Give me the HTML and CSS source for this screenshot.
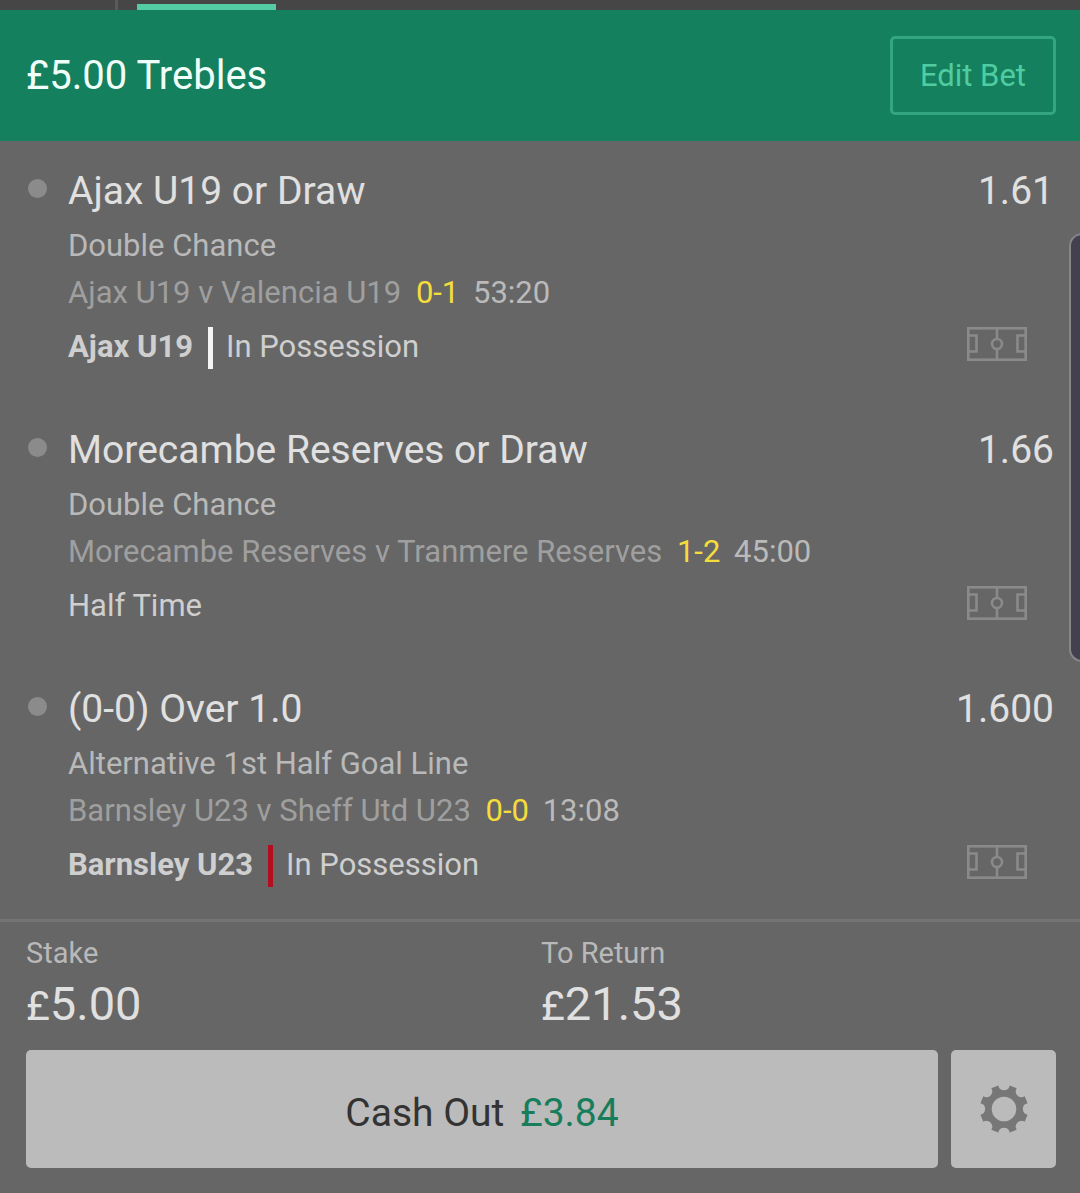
FILE: index.html
```
<!DOCTYPE html>
<html lang="en">

<head>
    <meta charset="UTF-8">
    <meta name="viewport" content="width=device-width, initial-scale=1.0">
    <title>My Bets</title>
    <link rel="stylesheet" href="styles.css">
</head>

<body>
    <!-- shared icons -->
    <svg class="icon-defs" aria-hidden="true">
        <symbol id="pitch" viewBox="0 0 60 34">
            <g fill="none" stroke="currentColor" stroke-width="2.6">
                <rect x="1.3" y="1.3" width="57.4" height="31.4" />
                <path d="M2 8.5h7.5v16H2M58 8.5h-7.5v16H58M30 1v10M30 22v11" />
                <circle cx="30" cy="17" r="5" />
            </g>
        </symbol>
    </svg>

    <div class="tabs">
        <span class="tab-divider"></span>
        <span class="tab-active"></span>
    </div>

    <header class="bet-header">
        <h1>£5.00 Trebles</h1>
        <button type="button" class="edit-btn">Edit Bet</button>
    </header>

    <main class="selections">
        <section class="selection">
            <span class="dot"></span>
            <div class="details">
                <div class="title-row">
                    <h2>Ajax U19 or Draw</h2>
                    <span class="odds">1.61</span>
                </div>
                <p class="market">Double Chance</p>
                <p class="fixture">Ajax U19 v Valencia U19 <span class="score">0-1</span> <span class="clock">53:20</span></p>
                <div class="status-row">
                    <strong>Ajax U19</strong>
                    <span class="team-bar white"></span>
                    <span>In Possession</span>
                    <svg class="pitch-icon"><use href="#pitch" /></svg>
                </div>
            </div>
        </section>

        <section class="selection">
            <span class="dot"></span>
            <div class="details">
                <div class="title-row">
                    <h2>Morecambe Reserves or Draw</h2>
                    <span class="odds">1.66</span>
                </div>
                <p class="market">Double Chance</p>
                <p class="fixture">Morecambe Reserves v Tranmere Reserves <span class="score">1-2</span> <span class="clock">45:00</span></p>
                <div class="status-row">
                    <span>Half Time</span>
                    <svg class="pitch-icon"><use href="#pitch" /></svg>
                </div>
            </div>
        </section>

        <section class="selection">
            <span class="dot"></span>
            <div class="details">
                <div class="title-row">
                    <h2>(0-0) Over 1.0</h2>
                    <span class="odds">1.600</span>
                </div>
                <p class="market">Alternative 1st Half Goal Line</p>
                <p class="fixture">Barnsley U23 v Sheff Utd U23 <span class="score">0-0</span> <span class="clock">13:08</span></p>
                <div class="status-row">
                    <strong>Barnsley U23</strong>
                    <span class="team-bar red"></span>
                    <span>In Possession</span>
                    <svg class="pitch-icon"><use href="#pitch" /></svg>
                </div>
            </div>
        </section>
    </main>

    <footer class="summary">
        <div class="totals">
            <div class="total">
                <span class="label">Stake</span>
                <span class="amount"><span class="currency">£</span>5.00</span>
            </div>
            <div class="total">
                <span class="label">To Return</span>
                <span class="amount"><span class="currency">£</span>21.53</span>
            </div>
        </div>
        <div class="actions">
            <button type="button" class="cashout-btn">Cash Out <span class="cashout-value">£3.84</span></button>
            <button type="button" class="settings-btn" aria-label="Cash out settings">
                <svg class="gear-icon" viewBox="-25 -25 50 50">
                    <path fill="currentColor" fill-rule="evenodd" d="M5.7 -23.6L12.7 -20.7A5.8 5.8 0 0 0 20.7 -12.7L23.6 -5.7A5.8 5.8 0 0 0 23.6 5.7L20.7 12.7A5.8 5.8 0 0 0 12.7 20.7L5.7 23.6A5.8 5.8 0 0 0 -5.7 23.6L-12.7 20.7A5.8 5.8 0 0 0 -20.7 12.7L-23.6 5.7A5.8 5.8 0 0 0 -23.6 -5.7L-20.7 -12.7A5.8 5.8 0 0 0 -12.7 -20.7L-5.7 -23.6A5.8 5.8 0 0 0 5.7 -23.6ZM12.3 0A12.3 12.3 0 1 0 -12.3 0A12.3 12.3 0 1 0 12.3 0Z" />
                </svg>
            </button>
        </div>
    </footer>

    <div class="edge-handle"></div>
</body>

</html>
```
FILE: styles.css
```
* {
    box-sizing: border-box;
}

body {
    position: relative;
    margin: 0;
    overflow-x: hidden;
    font-family: Roboto, "Liberation Sans", sans-serif;
    font-size: 31px;
    color: #cfcfcf;
    background-color: #666;
}

h1,
h2,
p {
    margin: 0;
    font-weight: 400;
}

button {
    font-family: inherit;
    cursor: pointer;
}

.icon-defs {
    display: none;
}

/* Tabs */

.tabs {
    display: flex;
    align-items: flex-end;
    gap: 19px;
    height: 10px;
    padding-left: 115px;
    background-color: #464646;
}

.tab-divider {
    width: 3px;
    height: 10px;
    background-color: #5a5a5a;
}

.tab-active {
    width: 139px;
    height: 6px;
    background-color: #55cda4;
}

/* Header */

.bet-header {
    display: flex;
    align-items: center;
    justify-content: space-between;
    padding: 26px 24px 26px 26px;
    background-color: #15805d;
}

.bet-header h1 {
    font-size: 40px;
    color: #f0fffa;
}

.edit-btn {
    height: 79px;
    padding: 0 27px;
    font-size: 31px;
    color: #50cca2;
    background: none;
    border: 3px solid #33a580;
    border-radius: 5px;
}

/* Selections */

.selections {
    padding-bottom: 1px;
}

.selection {
    display: flex;
    gap: 21px;
    padding: 24px 26px 31px 28px;
}

.dot {
    flex: none;
    width: 19px;
    height: 19px;
    margin-top: 14px;
    border-radius: 50%;
    background-color: #8b8b8b;
}

.details {
    flex: 1;
}

.title-row {
    display: flex;
    justify-content: space-between;
    margin-bottom: 4px;
    font-size: 39px;
    line-height: 52px;
    color: #e0e0e0;
}

.title-row h2 {
    font-size: 39px;
}

.market {
    line-height: 50px;
    color: #b9b9b9;
}

.fixture {
    line-height: 44px;
    color: #9f9f9f;
}

.score {
    margin-left: 7px;
    color: #f5dc3c;
}

.clock {
    margin-left: 6px;
    color: #bababa;
}

.status-row {
    display: flex;
    margin-top: 12px;
    height: 42px;
    line-height: 40px;
}

.team-bar {
    width: 5px;
    height: 42px;
    margin: 0 13px 0 15px;
}

.team-bar.white {
    background-color: #f4f4f4;
}

.team-bar.red {
    background-color: #b30d1e;
}

.pitch-icon {
    width: 60px;
    height: 34px;
    margin: 0 27px 0 auto;
    color: #8a8a8a;
}

/* Stake and cash out */

.summary {
    padding: 11px 24px 25px 26px;
    border-top: 3px solid #747474;
}

.totals {
    display: grid;
    grid-template-columns: 1fr 1fr;
}

.total {
    display: flex;
    flex-direction: column;
}

.label {
    font-size: 29px;
    line-height: 40px;
    color: #b9b9b9;
}

.amount {
    font-size: 47px;
    line-height: 62px;
    color: #e0e0e0;
}

.currency {
    font-size: 41px;
}

.actions {
    display: flex;
    gap: 13px;
    margin-top: 13px;
}

.cashout-btn,
.settings-btn {
    height: 118px;
    border: none;
    border-radius: 5px;
    background-color: #bbb;
}

.cashout-btn {
    flex: 1;
    padding-top: 8px;
    font-size: 39px;
    color: #333;
}

.cashout-value {
    margin-left: 6px;
    color: #177d5b;
}

.settings-btn {
    display: flex;
    align-items: center;
    justify-content: center;
    width: 105px;
    color: #777;
}

.gear-icon {
    width: 50px;
    height: 50px;
}

/* Edge panel handle that floats over the page */

.edge-handle {
    position: absolute;
    top: 233px;
    right: -2px;
    width: 13px;
    height: 429px;
    border: 2px solid #85858a;
    border-radius: 13px 0 0 13px;
    background-color: #43404f;
}
```
